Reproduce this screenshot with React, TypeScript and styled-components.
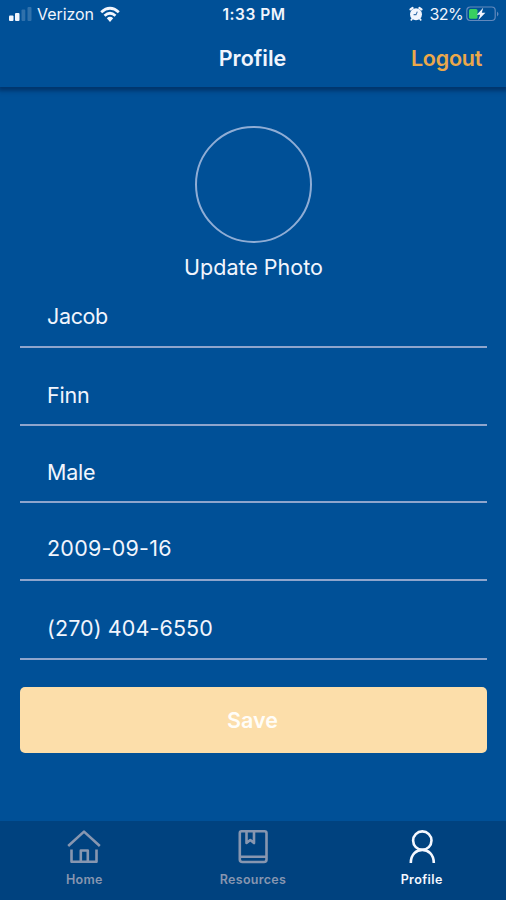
import React from "react";
import styled, { createGlobalStyle } from "styled-components";

const GlobalStyle = createGlobalStyle`
  * { box-sizing: border-box; }
  body { margin: 0; background: #005097; }
`;

const Screen = styled.div`
  display: flex;
  flex-direction: column;
  width: 506px;
  height: 900px;
  overflow: hidden;
  background: #005097;
  color: #f1f5fd;
  font-family: Inter, "Liberation Sans", sans-serif;
`;

const Top = styled.header`
  height: 87px;
  flex: none;
  box-shadow: 0 2px 4px 2px rgba(0, 35, 80, 0.6);
`;

const StatusBar = styled.div`
  display: grid;
  grid-template-columns: 1fr auto 1fr;
  align-items: center;
  height: 28px;
  padding: 0 7px 0 9px;
  font-size: 16px;
  line-height: 20px;
`;

const Cluster = styled.div<{ $end?: boolean }>`
  display: flex;
  align-items: center;
  justify-content: ${(p) => (p.$end ? "flex-end" : "flex-start")};
`;

const Carrier = styled.span`
  margin: 0 6px 0 4px;
  letter-spacing: -0.05px;
`;

const Clock = styled.span`
  padding-top: 2px;
  font-size: 15.5px;
  font-weight: 600;
  letter-spacing: 0.5px;
`;

const Percent = styled.span`
  margin: 0 3px 0 6px;
  letter-spacing: -0.6px;
`;

const TitleBar = styled.div`
  display: grid;
  grid-template-columns: 1fr auto 1fr;
  align-items: center;
  height: 59px;
  padding: 1px 24px 0 23px;
`;

const Title = styled.h1`
  grid-column: 2;
  margin: 0;
  font-size: 21.5px;
  font-weight: 600;
  line-height: 28px;
`;

const Logout = styled.button`
  justify-self: end;
  padding: 0;
  border: 0;
  background: none;
  color: #eba84b;
  font: inherit;
  font-size: 21.5px;
  font-weight: 600;
  line-height: 28px;
  letter-spacing: -0.25px;
`;

const Content = styled.main`
  display: flex;
  flex: 1;
  flex-direction: column;
  padding: 39px 19px 0 20px;
`;

const PhotoPicker = styled.div`
  display: flex;
  flex-direction: column;
  align-items: center;
  height: 159px;
  font-size: 21.5px;
  line-height: 28px;
`;

const Avatar = styled.div`
  width: 117px;
  height: 117px;
  margin-bottom: 10px;
  border: 2px solid #8fadd5;
  border-radius: 50%;
`;

const Field = styled.div<{ $height: number; $bottom: number; $spacing: number }>`
  display: flex;
  align-items: flex-end;
  height: ${(p) => p.$height}px;
  padding: 0 27px ${(p) => p.$bottom}px;
  border-bottom: 2px solid #8ea5cd;
  font-size: 21.5px;
  line-height: 28px;
  letter-spacing: ${(p) => p.$spacing}px;
`;

const SaveButton = styled.button`
  height: 66px;
  margin-top: 27px;
  padding: 0 2px 0 0;
  border: 0;
  border-radius: 5px;
  background: #fcdeaa;
  color: #fffdf8;
  font: inherit;
  font-size: 21.5px;
  font-weight: 600;
`;

const TabBar = styled.nav`
  display: grid;
  grid-template-columns: repeat(3, 1fr);
  flex: none;
  height: 79px;
  background: #00427f;
`;

const Tab = styled.div<{ $active?: boolean }>`
  display: flex;
  flex-direction: column;
  align-items: center;
  padding-top: 7px;
  color: ${(p) => (p.$active ? "#f5f8ff" : "#8796b0")};
  font-size: 12.5px;
  font-weight: 600;
  line-height: 16px;
  letter-spacing: ${(p) => (p.$active ? 0.4 : 0.3)}px;
`;

const TabIcon = styled.svg`
  width: 38px;
  height: 38px;
  margin-bottom: 6px;
  fill: none;
  stroke: currentColor;
  stroke-width: 2.6;
  stroke-linejoin: round;
`;

const fields = [
  { value: "Jacob", height: 63, bottom: 16, spacing: -0.35 },
  { value: "Finn", height: 78, bottom: 15, spacing: -0.2 },
  { value: "Male", height: 77, bottom: 15, spacing: -0.25 },
  { value: "2009-09-16", height: 78, bottom: 17, spacing: 0.25 },
  { value: "(270) 404-6550", height: 79, bottom: 16, spacing: 0.1 },
];

function Signal() {
  return (
    <svg width="24" height="16" viewBox="0 0 24 16" fill="#f1f5fd">
      <rect x="0" y="9.5" width="4.5" height="5.5" rx="1" />
      <rect x="6" y="7" width="4.5" height="8" rx="1" />
      <rect x="12.5" y="3.5" width="3.8" height="11.5" rx="1" opacity=".2" />
      <rect x="18.5" y="1" width="4" height="14" rx="1" opacity=".2" />
    </svg>
  );
}

function Wifi() {
  return (
    <svg width="20" height="17" viewBox="0 0 20 17" fill="none" stroke="#f1f5fd" strokeWidth="2.8">
      <path d="M1.2 6.2Q10-1.6 18.8 6.2M4.5 9.7Q10 4.8 15.5 9.7" />
      <path d="M6.8 12.3Q10 9.4 13.2 12.3L10 16Z" fill="#f1f5fd" stroke="none" />
    </svg>
  );
}

function Alarm() {
  return (
    <svg width="14" height="16" viewBox="0 0 14 16">
      <g fill="none" stroke="#f1f5fd" strokeLinecap="round">
        <path d="M1.5 3.4L3.6 2M10.4 2L12.5 3.4" strokeWidth="2.2" />
        <path d="M3 13L2.3 13.8M11 13L11.7 13.8" strokeWidth="1.8" />
      </g>
      <circle cx="7" cy="8.2" r="6" fill="#f1f5fd" />
      <path d="M8.3 5.6L7 8.6H4.6" fill="none" stroke="#3b72ad" strokeWidth="1.1" />
    </svg>
  );
}

function Battery() {
  return (
    <svg width="33" height="16" viewBox="0 0 33 16">
      <rect x=".8" y="1" width="28.4" height="13.5" rx="3.5" fill="none" stroke="#6289bd" strokeWidth="1.2" />
      <path d="M31 5.5Q34 8 31 10.5Z" fill="#6289bd" />
      <rect x="3" y="3" width="8.5" height="9.7" rx="1.5" fill="#38cf60" />
      <path d="M17.2 1.8L10.8 8.8H14.2L12.3 14L19.4 6.8H15.8Z" fill="#f1f5fd" />
    </svg>
  );
}

export default function App() {
  return (
    <>
      <GlobalStyle />
      <Screen>
        <Top>
          <StatusBar>
            <Cluster><Signal /><Carrier>Verizon</Carrier><Wifi /></Cluster>
            <Clock>1:33 PM</Clock>
            <Cluster $end><Alarm /><Percent>32%</Percent><Battery /></Cluster>
          </StatusBar>
          <TitleBar><Title>Profile</Title><Logout>Logout</Logout></TitleBar>
        </Top>
        <Content>
          <PhotoPicker><Avatar />Update Photo</PhotoPicker>
          {fields.map((f) => (
            <Field key={f.value} $height={f.height} $bottom={f.bottom} $spacing={f.spacing}>{f.value}</Field>
          ))}
          <SaveButton>Save</SaveButton>
        </Content>
        <TabBar>
          <Tab>
            <TabIcon viewBox="0 0 38 38">
              <path d="M3.2 18L19 3.6L34.8 18M6.5 21.5V33.7H31.5V21.5M15.8 33.7V22.5H22.8V33.7" />
            </TabIcon>
            Home
          </Tab>
          <Tab>
            <TabIcon viewBox="0 0 38 38">
              <path d="M7.5 3.3H30.5Q32.5 3.3 32.5 5.3V31.5Q32.5 34 30 34H8.5Q5.8 34 5.8 31.5V5.3Q5.8 3.3 7.5 3.3ZM6 28.7H32.5M12.5 4V15L16.3 12L20 15V4" />
            </TabIcon>
            Resources
          </Tab>
          <Tab $active>
            <TabIcon viewBox="0 0 38 38">
              <circle cx="19.3" cy="12.6" r="9.2" />
              <path d="M7.8 35C7.8 17.5 30.8 17.5 30.8 35" />
            </TabIcon>
            Profile
          </Tab>
        </TabBar>
      </Screen>
    </>
  );
}
